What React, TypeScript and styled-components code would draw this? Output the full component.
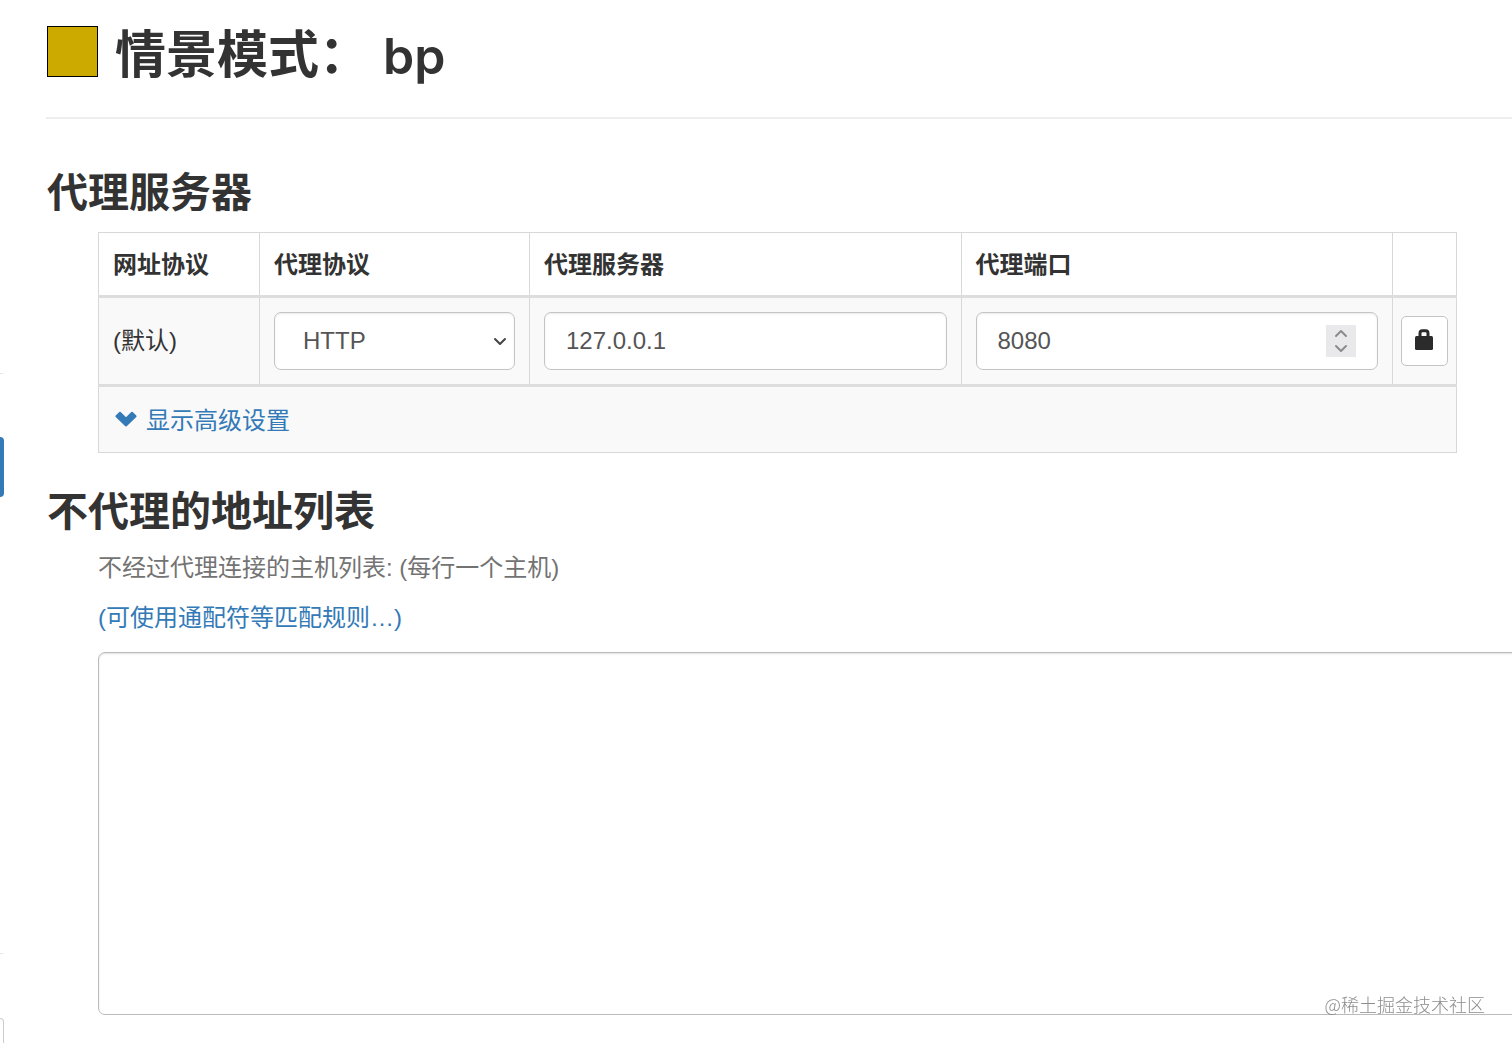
import React, { useState } from 'react';
import styled, { createGlobalStyle } from 'styled-components';

const GlobalStyle = createGlobalStyle`
  * { box-sizing: border-box; }
  body {
    margin: 0;
    overflow: hidden;
    background: #fff;
    color: #333;
    font-family: "Liberation Sans", "Noto Sans CJK SC", sans-serif;
    font-size: 24px;
    line-height: 34px;
  }
`;

const Page = styled.div`
  display: flex;
  min-height: 100vh;
  overflow: hidden;
`;

const Sidebar = styled.nav`
  display: flex;
  flex-direction: column;
  flex: none;
  width: 5px;
  padding-top: 373px;
`;

const SidebarDivider = styled.div`
  width: 3px;
  height: 1px;
  background: #e5e5e5;
`;

const ActiveItem = styled.div`
  width: 4px;
  height: 60px;
  margin: 63px 0 456px;
  border-radius: 0 6px 6px 0;
  background: #337ab7;
`;

const SidebarButton = styled.div`
  width: 4px;
  height: 60px;
  margin-top: 64px;
  margin-bottom: -60px;
  border: 1px solid #ccc;
  border-left: 0;
  border-radius: 0 6px 6px 0;
`;

const Main = styled.main`
  flex: 1;
  min-width: 0;
  padding-left: 41px;
`;

const PageHeader = styled.header`
  display: flex;
  align-items: center;
  gap: 17px;
  height: 119px;
  padding: 0 0 14px 1px;
  border-bottom: 2px solid #eee;
`;

const Swatch = styled.input`
  appearance: none;
  width: 51px;
  height: 51px;
  padding: 0;
  border: 0;
  background: none;
  &::-webkit-color-swatch-wrapper { padding: 0; }
  &::-webkit-color-swatch {
    border: 1px solid #000;
    border-radius: 0;
  }
`;

const Title = styled.h1`
  display: flex;
  align-items: center;
  gap: 13px;
  margin: 0;
  padding-top: 8px;
  font-size: 51px;
  line-height: 56px;
  font-weight: 600;
`;

const ProfileName = styled.span`
  font-family: Inter, "Liberation Sans", sans-serif;
  font-size: 50px;
`;

const SectionTitle = styled.h3`
  margin: 0;
  padding: 2px 0 0 1px;
  font-size: 41px;
  line-height: 46px;
  font-weight: 600;
`;

const ProxySection = styled.section`
  padding-top: 49px;
`;

const BypassSection = styled.section`
  padding-top: 34px;
`;

const Indented = styled.div`
  padding-left: 52px;
`;

const ProxyTable = styled.table`
  width: calc(100% - 55px);
  margin-top: 16px;
  border-collapse: collapse;
  table-layout: fixed;
  border: 1px solid #d8d8d8;
`;

const Col = styled.col<{ $width?: number }>`
  width: ${(p) => (p.$width ? `${p.$width}px` : 'auto')};
`;

const Th = styled.th`
  height: 64px;
  padding: 2px 14px 0;
  border: 1px solid #d8d8d8;
  text-align: left;
  font-weight: 600;
`;

const BodyRow = styled.tr`
  border-top: 3px solid #ddd;
  background: #f9f9f9;
`;

const Td = styled.td<{ $height: number; $narrow?: boolean }>`
  height: ${(p) => p.$height}px;
  padding: 0 ${(p) => (p.$narrow ? 8 : 14)}px;
  border-left: 1px solid #d8d8d8;
  border-right: 1px solid #d8d8d8;
`;

const Field = styled.div`
  position: relative;
  display: flex;
`;

const fieldLook = `
  appearance: none;
  width: 100%;
  height: 58px;
  border: 1px solid #c4c4c4;
  border-radius: 7px;
  background: #fff;
  box-shadow: inset 0 1px 2px rgba(0, 0, 0, 0.08);
  color: #555;
  font: inherit;
  outline: none;
`;

const Select = styled.select`
  ${fieldLook}
  padding: 0 28px;
`;

const Input = styled.input`
  ${fieldLook}
  padding: 0 21px;
  &::-webkit-inner-spin-button { display: none; }
`;

const SelectArrow = styled.svg`
  position: absolute;
  right: 8px;
  top: 24px;
  pointer-events: none;
`;

const Stepper = styled.div`
  position: absolute;
  right: 22px;
  top: 13px;
  display: flex;
  flex-direction: column;
  width: 30px;
  background: #e9e9ec;
`;

const Step = styled.button`
  display: flex;
  justify-content: center;
  align-items: center;
  height: 16px;
  padding: 0;
  border: 0;
  background: none;
`;

const LockButton = styled.button`
  display: flex;
  justify-content: center;
  align-items: center;
  width: 47px;
  height: 50px;
  padding: 0 1px 4px 0;
  border: 1px solid #c4c4c4;
  border-radius: 5px;
  background: #fff;
`;

const Link = styled.a`
  color: #337ab7;
  text-decoration: none;
`;

const AdvancedLink = styled(Link)`
  display: inline-flex;
  align-items: center;
  gap: 9px;
  padding: 2px 0 0 2px;
  vertical-align: middle;
`;

const HelpText = styled.p`
  margin: 0;
  padding-top: 16px;
  color: #737373;
`;

const BypassList = styled.textarea`
  display: block;
  width: calc(100% + 20px);
  height: 363px;
  margin-top: 17px;
  padding: 10px 20px;
  border: 1px solid #bbb;
  border-radius: 7px;
  box-shadow: inset 0 1px 2px rgba(0, 0, 0, 0.12);
  background: #fff;
  color: #555;
  font: inherit;
  resize: none;
  outline: none;
`;

const Watermark = styled.div`
  position: fixed;
  right: 27px;
  bottom: 26px;
  color: #8c8c8c;
  font-family: "Noto Sans CJK SC", sans-serif;
  font-size: 18px;
  font-weight: 300;
  line-height: 26px;
  text-shadow: -1px -1px 0 #fff;
`;

export default function App() {
  const [color, setColor] = useState('#ccaa00');
  const [server, setServer] = useState('127.0.0.1');
  const [port, setPort] = useState(8080);
  const [bypass, setBypass] = useState('');

  return (
    <>
      <GlobalStyle />
      <Page>
        <Sidebar>
          <SidebarDivider />
          <ActiveItem />
          <SidebarDivider />
          <SidebarButton />
        </Sidebar>
        <Main>
          <PageHeader>
            <Swatch type="color" aria-labelledby="title" value={color} onChange={(e) => setColor(e.target.value)} />
            <Title id="title">
              情景模式：<ProfileName>bp</ProfileName>
            </Title>
          </PageHeader>

          <ProxySection>
            <SectionTitle>代理服务器</SectionTitle>
            <Indented>
              <ProxyTable>
                <colgroup>
                  <Col $width={161} />
                  <Col $width={270} />
                  <Col />
                  <Col />
                  <Col $width={64} />
                </colgroup>
                <thead>
                  <tr>
                    <Th>网址协议</Th>
                    <Th id="scheme">代理协议</Th>
                    <Th id="server">代理服务器</Th>
                    <Th id="port">代理端口</Th>
                    <Th as="td" />
                  </tr>
                </thead>
                <tbody>
                  <BodyRow>
                    <Td $height={89}>(默认)</Td>
                    <Td $height={89}>
                      <Field>
                        <Select aria-labelledby="scheme" defaultValue="HTTP">
                          <option>HTTP</option>
                          <option>HTTPS</option>
                          <option>SOCKS4</option>
                          <option>SOCKS5</option>
                        </Select>
                        <SelectArrow width="14" height="12" viewBox="0 0 14 12" fill="none" stroke="#444" strokeWidth="2" strokeLinecap="round" strokeLinejoin="round">
                          <path d="M2 3 7 8l5-5" />
                        </SelectArrow>
                      </Field>
                    </Td>
                    <Td $height={89}>
                      <Field>
                        <Input type="text" aria-labelledby="server" value={server} onChange={(e) => setServer(e.target.value)} />
                      </Field>
                    </Td>
                    <Td $height={89}>
                      <Field>
                        <Input type="number" aria-labelledby="port" value={port} onChange={(e) => setPort(Number(e.target.value))} />
                        <Stepper>
                          <Step type="button" aria-label="增加" onClick={() => setPort(port + 1)}>
                            <svg width="14" height="10" viewBox="0 0 14 10" fill="none" stroke="#8b8b8f" strokeWidth="2" strokeLinecap="round" strokeLinejoin="round">
                              <path d="M2 8 7 3l5 5" />
                            </svg>
                          </Step>
                          <Step type="button" aria-label="减少" onClick={() => setPort(port - 1)}>
                            <svg width="14" height="10" viewBox="0 0 14 10" fill="none" stroke="#8b8b8f" strokeWidth="2" strokeLinecap="round" strokeLinejoin="round">
                              <path d="M2 2l5 5 5-5" />
                            </svg>
                          </Step>
                        </Stepper>
                      </Field>
                    </Td>
                    <Td $height={89} $narrow>
                      <LockButton type="button" aria-label="身份验证">
                        <svg width="18" height="21" viewBox="0 0 18 21" fill="none">
                          <rect x="0" y="7" width="18" height="14" rx="1.5" fill="#2b2b2b" />
                          <path d="M5 8V4.200Q5 1.800 7.200 1.800h3.600Q13 1.800 13 4.200V8" stroke="#2b2b2b" strokeWidth="3" />
                        </svg>
                      </LockButton>
                    </Td>
                  </BodyRow>
                  <BodyRow>
                    <Td $height={67} colSpan={5}>
                      <AdvancedLink href="#advanced">
                        <svg width="22" height="20" viewBox="0 0 22 20" fill="#337ab7">
                          <path d="M.7 4.600 4.300 1q.7-.6 1.400 0L11 6.300 16.300 1q.7-.6 1.400 0l3.600 3.600q.6.7 0 1.400l-9.600 9.200q-.7.600-1.400 0L.7 6q-.6-.7 0-1.400Z" />
                        </svg>
                        显示高级设置
                      </AdvancedLink>
                    </Td>
                  </BodyRow>
                </tbody>
              </ProxyTable>
            </Indented>
          </ProxySection>

          <BypassSection>
            <SectionTitle id="bypass">不代理的地址列表</SectionTitle>
            <Indented>
              <HelpText>不经过代理连接的主机列表: (每行一个主机)</HelpText>
              <HelpText>
                <Link href="#rules">(可使用通配符等匹配规则…)</Link>
              </HelpText>
              <BypassList aria-labelledby="bypass" value={bypass} onChange={(e) => setBypass(e.target.value)} />
            </Indented>
          </BypassSection>
        </Main>
        <Watermark>@稀土掘金技术社区</Watermark>
      </Page>
    </>
  );
}
